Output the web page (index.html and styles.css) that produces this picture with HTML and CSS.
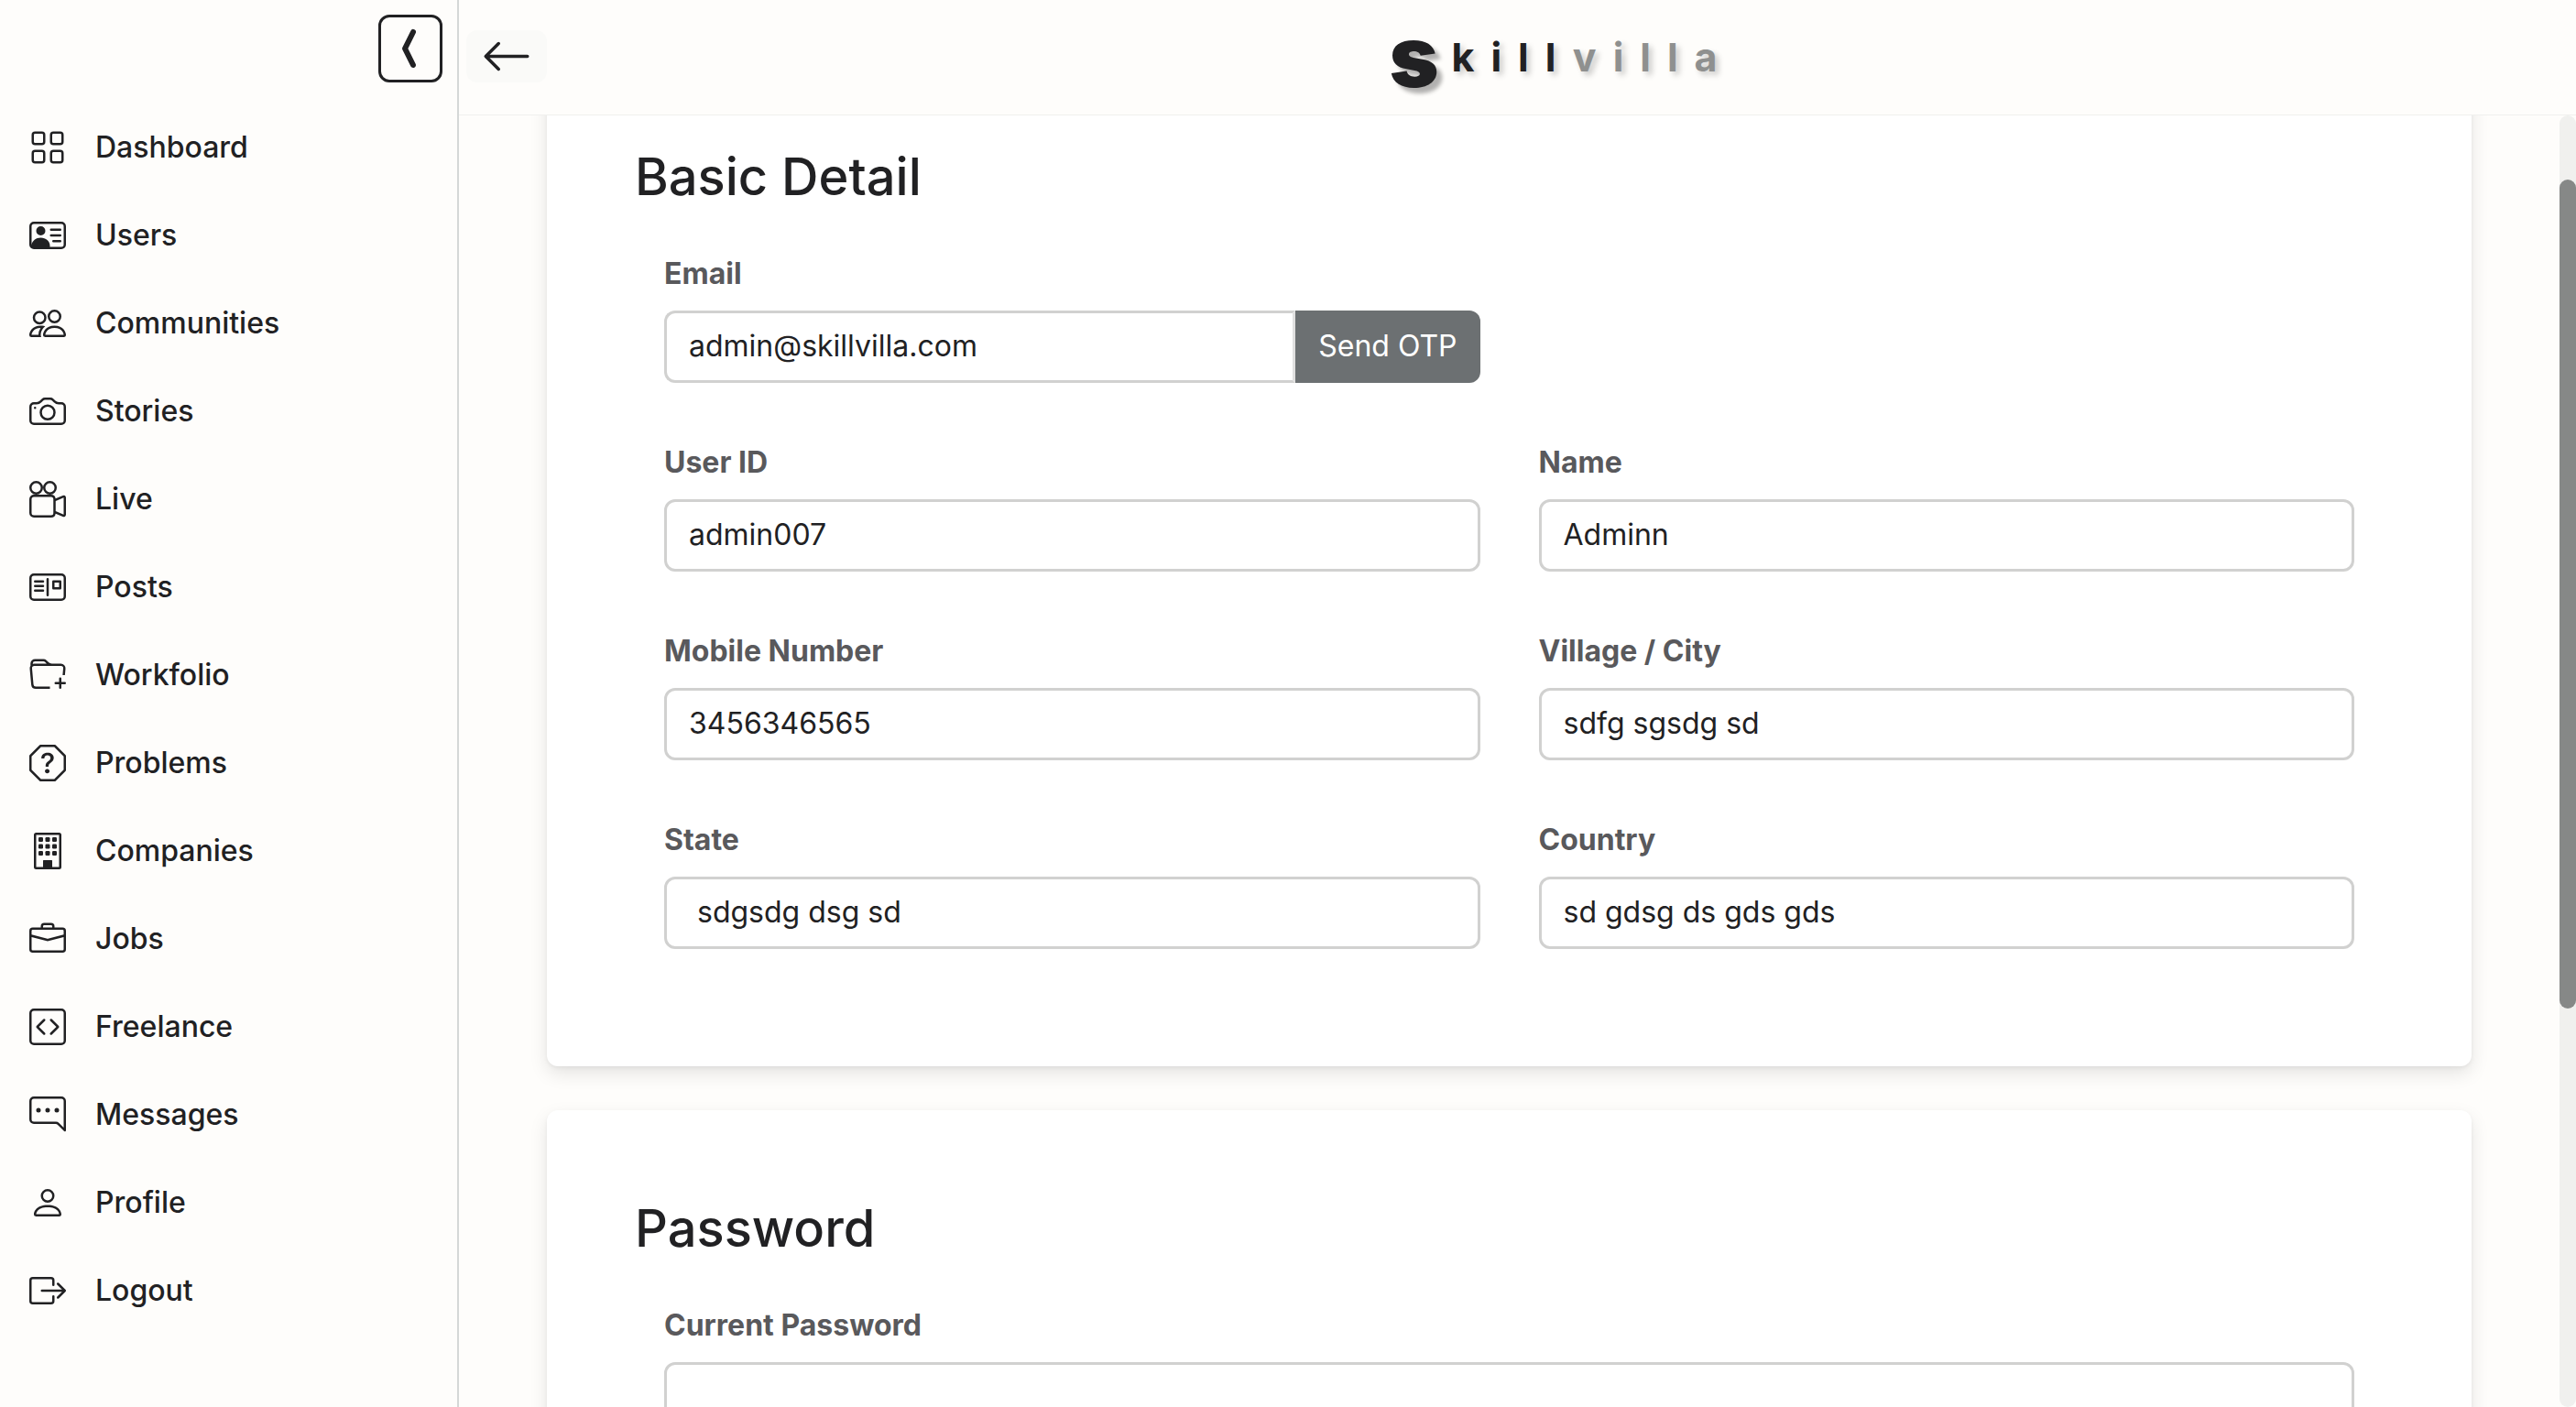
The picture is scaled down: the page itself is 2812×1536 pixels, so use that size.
FILE: index.html
```html
<!DOCTYPE html>
<html lang="en">
<head>
<meta charset="utf-8">
<meta name="viewport" content="width=device-width, initial-scale=1">
<title>Skillvilla – Profile</title>
<link rel="stylesheet" href="styles.css">
</head>
<body>
<div class="app">
  <aside class="sidebar">
    <div class="sidebar-top">
      <button class="toggle" type="button" aria-label="Collapse menu">
        <svg class="toggle-icon" viewBox="0 0 16 16"><path d="M9.224 1.553a.5.5 0 0 1 .223.67L6.56 8l2.888 5.776a.5.5 0 1 1-.894.448l-3-6a.5.5 0 0 1 0-.448l3-6a.5.5 0 0 1 .67-.223"/></svg>
      </button>
    </div>
    <nav class="nav">
      <a class="nav-link" href="#dashboard"><svg class="icon" viewBox="0 0 16 16"><path d="M1 2.5A1.5 1.5 0 0 1 2.5 1h3A1.5 1.5 0 0 1 7 2.5v3A1.5 1.5 0 0 1 5.5 7h-3A1.5 1.5 0 0 1 1 5.5zM2.5 2a.5.5 0 0 0-.5.5v3a.5.5 0 0 0 .5.5h3a.5.5 0 0 0 .5-.5v-3a.5.5 0 0 0-.5-.5zm6.5.5A1.5 1.5 0 0 1 10.5 1h3A1.5 1.5 0 0 1 15 2.5v3A1.5 1.5 0 0 1 13.5 7h-3A1.5 1.5 0 0 1 9 5.5zm1.5-.5a.5.5 0 0 0-.5.5v3a.5.5 0 0 0 .5.5h3a.5.5 0 0 0 .5-.5v-3a.5.5 0 0 0-.5-.5zM1 10.5A1.5 1.5 0 0 1 2.5 9h3A1.5 1.5 0 0 1 7 10.5v3A1.5 1.5 0 0 1 5.5 15h-3A1.5 1.5 0 0 1 1 13.5zm1.5-.5a.5.5 0 0 0-.5.5v3a.5.5 0 0 0 .5.5h3a.5.5 0 0 0 .5-.5v-3a.5.5 0 0 0-.5-.5zm6.5.5A1.5 1.5 0 0 1 10.5 9h3a1.5 1.5 0 0 1 1.5 1.5v3a1.5 1.5 0 0 1-1.5 1.5h-3A1.5 1.5 0 0 1 9 13.5zm1.5-.5a.5.5 0 0 0-.5.5v3a.5.5 0 0 0 .5.5h3a.5.5 0 0 0 .5-.5v-3a.5.5 0 0 0-.5-.5z"/></svg>Dashboard</a>
      <a class="nav-link" href="#users"><svg class="icon" viewBox="0 0 16 16"><path d="M5 8a2 2 0 1 0 0-4 2 2 0 0 0 0 4m4-2.5a.5.5 0 0 1 .5-.5h4a.5.5 0 0 1 0 1h-4a.5.5 0 0 1-.5-.5M9 8a.5.5 0 0 1 .5-.5h4a.5.5 0 0 1 0 1h-4A.5.5 0 0 1 9 8m1 2.5a.5.5 0 0 1 .5-.5h3a.5.5 0 0 1 0 1h-3a.5.5 0 0 1-.5-.5"/><path d="M2 2a2 2 0 0 0-2 2v8a2 2 0 0 0 2 2h12a2 2 0 0 0 2-2V4a2 2 0 0 0-2-2zM1 4a1 1 0 0 1 1-1h12a1 1 0 0 1 1 1v8a1 1 0 0 1-1 1H8.96q.04-.245.04-.5C9 10.567 7.21 9 5 9c-2.086 0-3.8 1.398-3.984 3.181A1 1 0 0 1 1 12z"/></svg>Users</a>
      <a class="nav-link" href="#communities"><svg class="icon" viewBox="0 0 16 16"><path d="M15 14s1 0 1-1-1-4-5-4-5 3-5 4 1 1 1 1zm-7.978-1L7 12.996c.001-.264.167-1.03.76-1.72C8.312 10.629 9.282 10 11 10c1.717 0 2.687.63 3.24 1.276.593.69.758 1.457.76 1.72l-.008.002-.014.002zM11 7a2 2 0 1 0 0-4 2 2 0 0 0 0 4m3-2a3 3 0 1 1-6 0 3 3 0 0 1 6 0M6.936 9.28a6 6 0 0 0-1.23-.247A7 7 0 0 0 5 9c-4 0-5 3-5 4q0 1 1 1h4.216A2.24 2.24 0 0 1 5 13c0-1.01.377-2.042 1.09-2.904.243-.294.526-.569.846-.816M4.92 10A5.5 5.5 0 0 0 4 13H1c0-.26.164-1.03.76-1.724.545-.636 1.492-1.256 3.16-1.275ZM1.5 5.5a3 3 0 1 1 6 0 3 3 0 0 1-6 0m3-2a2 2 0 1 0 0 4 2 2 0 0 0 0-4"/></svg>Communities</a>
      <a class="nav-link" href="#stories"><svg class="icon" viewBox="0 0 16 16"><path d="M15 12a1 1 0 0 1-1 1H2a1 1 0 0 1-1-1V6a1 1 0 0 1 1-1h1.172a3 3 0 0 0 2.12-.879l.83-.828A1 1 0 0 1 6.827 3h2.344a1 1 0 0 1 .707.293l.828.828A3 3 0 0 0 12.828 5H14a1 1 0 0 1 1 1zM2 4a2 2 0 0 0-2 2v6a2 2 0 0 0 2 2h12a2 2 0 0 0 2-2V6a2 2 0 0 0-2-2h-1.172a2 2 0 0 1-1.414-.586l-.828-.828A2 2 0 0 0 9.172 2H6.828a2 2 0 0 0-1.414.586l-.828.828A2 2 0 0 1 3.172 4z"/><path d="M8 11a2.5 2.5 0 1 1 0-5 2.5 2.5 0 0 1 0 5m0 1a3.5 3.5 0 1 0 0-7 3.5 3.5 0 0 0 0 7M3 6.5a.5.5 0 1 1-1 0 .5.5 0 0 1 1 0"/></svg>Stories</a>
      <a class="nav-link" href="#live"><svg class="icon" viewBox="0 0 16 16"><path d="M6 3a3 3 0 1 1-6 0 3 3 0 0 1 6 0M1 3a2 2 0 1 0 4 0 2 2 0 0 0-4 0"/><path d="M9 6h.5a2 2 0 0 1 1.983 1.738l3.11-1.382A1 1 0 0 1 16 7.269v7.462a1 1 0 0 1-1.406.913l-3.111-1.382A2 2 0 0 1 9.5 16H2a2 2 0 0 1-2-2V8a2 2 0 0 1 2-2zm6 8.73V7.27l-3.5 1.555v4.35zM1 8v6a1 1 0 0 0 1 1h7.5a1 1 0 0 0 1-1V8a1 1 0 0 0-1-1H2a1 1 0 0 0-1 1"/><path d="M9 6a3 3 0 1 0 0-6 3 3 0 0 0 0 6M7 3a2 2 0 1 1 4 0 2 2 0 0 1-4 0"/></svg>Live</a>
      <a class="nav-link" href="#posts"><svg class="icon" viewBox="0 0 16 16"><path fill-rule="evenodd" d="M2 2a2 2 0 0 0-2 2v8a2 2 0 0 0 2 2h12a2 2 0 0 0 2-2V4a2 2 0 0 0-2-2zM1 4a1 1 0 0 1 1-1h12a1 1 0 0 1 1 1v8a1 1 0 0 1-1 1H2a1 1 0 0 1-1-1zm7.5.5a.5.5 0 0 0-1 0v7a.5.5 0 0 0 1 0zM2 5.5a.5.5 0 0 1 .5-.5H6a.5.5 0 0 1 0 1H2.5a.5.5 0 0 1-.5-.5m0 2a.5.5 0 0 1 .5-.5H6a.5.5 0 0 1 0 1H2.5a.5.5 0 0 1-.5-.5m0 2a.5.5 0 0 1 .5-.5H6a.5.5 0 0 1 0 1H2.5a.5.5 0 0 1-.5-.5M10.5 5a.5.5 0 0 0-.5.5v3a.5.5 0 0 0 .5.5h3a.5.5 0 0 0 .5-.5v-3a.5.5 0 0 0-.5-.5zM13 8h-2V6h2z"/></svg>Posts</a>
      <a class="nav-link" href="#workfolio"><svg class="icon" viewBox="0 0 16 16"><path d="m.5 3 .04.87a2 2 0 0 0-.342 1.311l.637 7A2 2 0 0 0 2.826 14H9v-1H2.826a1 1 0 0 1-.995-.91l-.637-7A1 1 0 0 1 2.19 4h11.62a1 1 0 0 1 .996 1.09L14.54 8h1.005l.256-2.819A2 2 0 0 0 13.81 3H9.828a2 2 0 0 1-1.414-.586l-.828-.828A2 2 0 0 0 6.172 1H2.5a2 2 0 0 0-2 2m5.672-1a1 1 0 0 1 .707.293L7.586 3H2.19q-.362.002-.683.12L1.5 2.98a1 1 0 0 1 1-.98z"/><path d="M13.5 9a.5.5 0 0 1 .5.5V11h1.5a.5.5 0 1 1 0 1H14v1.5a.5.5 0 1 1-1 0V12h-1.5a.5.5 0 0 1 0-1H13V9.5a.5.5 0 0 1 .5-.5"/></svg>Workfolio</a>
      <a class="nav-link" href="#problems"><svg class="icon" viewBox="0 0 16 16"><path d="M4.54.146A.5.5 0 0 1 4.893 0h6.214a.5.5 0 0 1 .353.146l4.394 4.394a.5.5 0 0 1 .146.353v6.214a.5.5 0 0 1-.146.353l-4.394 4.394a.5.5 0 0 1-.353.146H4.893a.5.5 0 0 1-.353-.146L.146 11.46A.5.5 0 0 1 0 11.107V4.893a.5.5 0 0 1 .146-.353zM5.1 1 1 5.1v5.8L5.1 15h5.8l4.1-4.1V5.1L10.9 1z"/><path d="M5.255 5.786a.237.237 0 0 0 .241.247h.825c.138 0 .248-.113.266-.25.09-.656.54-1.134 1.342-1.134.686 0 1.314.343 1.314 1.168 0 .635-.374.927-.965 1.371-.673.489-1.206 1.06-1.168 1.987l.003.217a.25.25 0 0 0 .25.246h.811a.25.25 0 0 0 .25-.25v-.105c0-.718.273-.927 1.01-1.486.609-.463 1.244-.977 1.244-2.056 0-1.511-1.276-2.241-2.673-2.241-1.267 0-2.655.59-2.75 2.286m1.557 5.763c0 .533.425.927 1.01.927.609 0 1.028-.394 1.028-.927 0-.552-.42-.94-1.029-.94-.584 0-1.009.388-1.009.94"/></svg>Problems</a>
      <a class="nav-link" href="#companies"><svg class="icon" viewBox="0 0 16 16"><path d="M2 1a1 1 0 0 1 1-1h10a1 1 0 0 1 1 1v14a1 1 0 0 1-1 1H3a1 1 0 0 1-1-1zm11 0H3v14h3v-2.5a.5.5 0 0 1 .5-.5h3a.5.5 0 0 1 .5.5V15h3z"/><g><rect x="4" y="2" width="2" height="2" rx=".5"/><rect x="7" y="2" width="2" height="2" rx=".5"/><rect x="10" y="2" width="2" height="2" rx=".5"/><rect x="4" y="5" width="2" height="2" rx=".5"/><rect x="7" y="5" width="2" height="2" rx=".5"/><rect x="10" y="5" width="2" height="2" rx=".5"/><rect x="4" y="8" width="2" height="2" rx=".5"/><rect x="7" y="8" width="2" height="2" rx=".5"/><rect x="10" y="8" width="2" height="2" rx=".5"/><rect x="6" y="12" width="4" height="4" rx=".5"/></g></svg>Companies</a>
      <a class="nav-link" href="#jobs"><svg class="icon" viewBox="0 0 16 16"><path d="M6.5 1A1.5 1.5 0 0 0 5 2.5V3H1.5A1.5 1.5 0 0 0 0 4.5v8A1.5 1.5 0 0 0 1.5 14h13a1.5 1.5 0 0 0 1.5-1.5v-8A1.5 1.5 0 0 0 14.5 3H11v-.5A1.5 1.5 0 0 0 9.5 1zm0 1h3a.5.5 0 0 1 .5.5V3H6v-.5a.5.5 0 0 1 .5-.5m1.886 6.914L15 7.151V12.5a.5.5 0 0 1-.5.5h-13a.5.5 0 0 1-.5-.5V7.15l6.614 1.764a1.5 1.5 0 0 0 .772 0M1.5 4h13a.5.5 0 0 1 .5.5v1.616L8.129 7.948a.5.5 0 0 1-.258 0L1 6.116V4.5a.5.5 0 0 1 .5-.5"/></svg>Jobs</a>
      <a class="nav-link" href="#freelance"><svg class="icon" viewBox="0 0 16 16"><path d="M14 1a1 1 0 0 1 1 1v12a1 1 0 0 1-1 1H2a1 1 0 0 1-1-1V2a1 1 0 0 1 1-1zM2 0a2 2 0 0 0-2 2v12a2 2 0 0 0 2 2h12a2 2 0 0 0 2-2V2a2 2 0 0 0-2-2z"/><path d="M6.854 4.646a.5.5 0 0 1 0 .708L4.207 8l2.647 2.646a.5.5 0 0 1-.708.708l-3-3a.5.5 0 0 1 0-.708l3-3a.5.5 0 0 1 .708 0m2.292 0a.5.5 0 0 0 0 .708L11.793 8l-2.647 2.646a.5.5 0 0 0 .708.708l3-3a.5.5 0 0 0 0-.708l-3-3a.5.5 0 0 0-.708 0"/></svg>Freelance</a>
      <a class="nav-link" href="#messages"><svg class="icon" viewBox="0 0 16 16"><path d="M2 1a1 1 0 0 0-1 1v8a1 1 0 0 0 1 1h9.586a2 2 0 0 1 1.414.586l2 2V2a1 1 0 0 0-1-1zm12-1a2 2 0 0 1 2 2v12.793a.5.5 0 0 1-.854.353l-2.853-2.853a1 1 0 0 0-.707-.293H2a2 2 0 0 1-2-2V2a2 2 0 0 1 2-2z"/><path d="M5 6a1 1 0 1 1-2 0 1 1 0 0 1 2 0m4 0a1 1 0 1 1-2 0 1 1 0 0 1 2 0m4 0a1 1 0 1 1-2 0 1 1 0 0 1 2 0"/></svg>Messages</a>
      <a class="nav-link" href="#profile"><svg class="icon" viewBox="0 0 16 16"><path d="M8 8a3 3 0 1 0 0-6 3 3 0 0 0 0 6m2-3a2 2 0 1 1-4 0 2 2 0 0 1 4 0m4 8c0 1-1 1-1 1H3s-1 0-1-1 1-4 6-4 6 3 6 4m-1-.004c-.001-.246-.154-.986-.832-1.664C11.516 10.68 10.289 10 8 10s-3.516.68-4.168 1.332c-.678.678-.83 1.418-.832 1.664z"/></svg>Profile</a>
      <a class="nav-link" href="#logout"><svg class="icon" viewBox="0 0 16 16"><path d="M10 12.5a.5.5 0 0 1-.5.5h-8a.5.5 0 0 1-.5-.5v-9a.5.5 0 0 1 .5-.5h8a.5.5 0 0 1 .5.5v2a.5.5 0 0 0 1 0v-2A1.5 1.5 0 0 0 9.5 2h-8A1.5 1.5 0 0 0 0 3.5v9A1.5 1.5 0 0 0 1.5 14h8a1.5 1.5 0 0 0 1.5-1.5v-2a.5.5 0 0 0-1 0z"/><path d="M15.854 8.354a.5.5 0 0 0 0-.708l-3-3a.5.5 0 0 0-.708.708L14.293 7.5H5.5a.5.5 0 0 0 0 1h8.793l-2.147 2.146a.5.5 0 0 0 .708.708z"/></svg>Logout</a>
    </nav>
  </aside>

  <div class="page">
    <header class="header">
      <button class="back" type="button" aria-label="Back">
        <svg class="back-icon" viewBox="0 0 16 16"><path d="M15 8a.5.5 0 0 0-.5-.5H2.707l3.147-3.146a.5.5 0 1 0-.708-.708l-4 4a.5.5 0 0 0 0 .708l4 4a.5.5 0 0 0 .708-.708L2.707 8.5H14.5A.5.5 0 0 0 15 8"/></svg>
      </button>
      <div class="logo"><span class="logo-mark">s</span><span class="logo-text">kill<span class="logo-soft">villa</span></span></div>
    </header>

    <div class="body">
      <main class="content">
        <div class="cards">
          <section class="card">
            <h2 class="card-title">Basic Detail</h2>
            <form class="form">
              <div class="field">
                <label class="label" for="email">Email</label>
                <div class="input-group">
                  <input class="input" id="email" type="email" value="admin@skillvilla.com">
                  <button class="otp" type="button">Send OTP</button>
                </div>
              </div>
              <div class="field field-start">
                <label class="label" for="userid">User ID</label>
                <input class="input" id="userid" type="text" value="admin007">
              </div>
              <div class="field">
                <label class="label" for="name">Name</label>
                <input class="input" id="name" type="text" value="Adminn">
              </div>
              <div class="field">
                <label class="label" for="mobile">Mobile Number</label>
                <input class="input" id="mobile" type="text" value="3456346565">
              </div>
              <div class="field">
                <label class="label" for="city">Village / City</label>
                <input class="input" id="city" type="text" value="sdfg sgsdg sd">
              </div>
              <div class="field">
                <label class="label" for="state">State</label>
                <input class="input" id="state" type="text" value=" sdgsdg dsg sd">
              </div>
              <div class="field">
                <label class="label" for="country">Country</label>
                <input class="input" id="country" type="text" value="sd gdsg ds gds gds">
              </div>
            </form>
          </section>
          <section class="card">
            <h2 class="card-title">Password</h2>
            <form class="form">
              <div class="field field-wide">
                <label class="label" for="current">Current Password</label>
                <input class="input" id="current" type="password">
              </div>
            </form>
          </section>
        </div>
      </main>
      <div class="scrollbar" aria-hidden="true"><div class="scrollbar-thumb"></div></div>
    </div>
  </div>
</div>
</body>
</html>
```

FILE: styles.css
```css
* {
  box-sizing: border-box;
}

body {
  margin: 0;
  background: #fefdfb;
  color: #212123;
  font-family: Inter, "Liberation Sans", sans-serif;
  font-size: 32px;
  line-height: 48px;
}

button,
input {
  font: inherit;
  color: inherit;
}

svg {
  display: block;
  fill: currentColor;
}

.app {
  display: flex;
  height: 100vh;
  overflow: hidden;
}

/* Sidebar */

.sidebar {
  flex: none;
  width: 501px;
  border-right: 2px solid #d5d8d7;
}

.sidebar-top {
  display: flex;
  justify-content: flex-end;
  padding: 16px 16px 23px;
}

.toggle {
  display: flex;
  align-items: center;
  justify-content: center;
  width: 70px;
  height: 74px;
  padding: 0;
  border: 3px solid #212123;
  border-radius: 12px;
  background: none;
}

.toggle-icon {
  width: 48px;
  height: 48px;
  stroke: currentColor;
  stroke-width: 1;
}

.nav {
  display: flex;
  flex-direction: column;
}

.nav-link {
  display: flex;
  align-items: center;
  gap: 32px;
  height: 96px;
  padding: 0 32px;
  color: inherit;
  font-weight: 500;
  text-decoration: none;
}

.icon {
  flex: none;
  width: 40px;
  height: 40px;
}

/* Header */

.page {
  display: flex;
  flex: 1;
  flex-direction: column;
  min-width: 0;
}

.header {
  display: flex;
  flex: none;
  align-items: center;
  height: 126px;
  padding: 0 0 2px 8px;
  border-bottom: 1px solid #f0f0ee;
}

.back {
  padding: 0 16px;
  border: 0;
  border-radius: 12px;
  background: #fafaf8;
}

.back-icon {
  width: 56px;
  height: 57px;
}

.logo {
  display: flex;
  flex: 1;
  align-items: center;
  justify-content: center;
  gap: 14px;
}

.logo-mark {
  font-size: 92px;
  font-weight: 900;
  line-height: 72px;
  text-shadow: 6px 6px 4px rgba(0, 0, 0, 0.3);
}

.logo-text {
  font-size: 43px;
  font-weight: 700;
  letter-spacing: 18px;
  text-shadow: 4px 4px 6px rgba(0, 0, 0, 0.2);
}

.logo-soft {
  color: #8f908f;
}

/* Content */

.body {
  display: flex;
  flex: 1;
  min-height: 0;
}

.content {
  flex: 1;
  min-width: 0;
  overflow: hidden;
  padding: 0 96px;
}

.cards {
  display: flex;
  flex-direction: column;
  gap: 48px;
  margin-top: -62px;
}

.card {
  padding: 96px;
  border-radius: 12px;
  background: #fff;
  box-shadow: 0 8px 20px rgba(0, 0, 0, 0.1), 0 2px 4px rgba(0, 0, 0, 0.05);
}

.card-title {
  margin: 0 0 48px;
  font-size: 56px;
  font-weight: 500;
  line-height: 67px;
}

.form {
  display: grid;
  grid-template-columns: 1fr 1fr;
  gap: 63px 64px;
  padding: 0 32px 32px;
}

.field {
  display: flex;
  flex-direction: column;
  gap: 16px;
  min-width: 0;
}

.field-start {
  grid-column-start: 1;
}

.field-wide {
  grid-column: 1 / -1;
}

.label {
  color: #59595c;
  font-weight: 700;
}

.input {
  width: 100%;
  min-width: 0;
  height: 79px;
  padding: 0 24px 2px;
  border: 3px solid #d1d1d0;
  border-radius: 12px;
  background: #fff;
}

.input-group {
  display: flex;
}

.input-group .input {
  flex: 1;
  border-right-color: #e0e0e0;
  border-top-right-radius: 0;
  border-bottom-right-radius: 0;
}

.otp {
  flex: none;
  padding: 0 25px 2px;
  border: 0;
  border-radius: 0 12px 12px 0;
  background: #6c7072;
  color: #fff;
}

.scrollbar {
  display: flex;
  flex: none;
  flex-direction: column;
  width: 18px;
  border-radius: 9px;
  background: #f0f0ee;
}

/* Thumb and the free track above and below it share the height. */
.scrollbar::before {
  flex: 70;
  content: "";
}

.scrollbar::after {
  flex: 435;
  content: "";
}

.scrollbar-thumb {
  flex: 905;
  border-radius: 9px;
  background: #868887;
}
```
